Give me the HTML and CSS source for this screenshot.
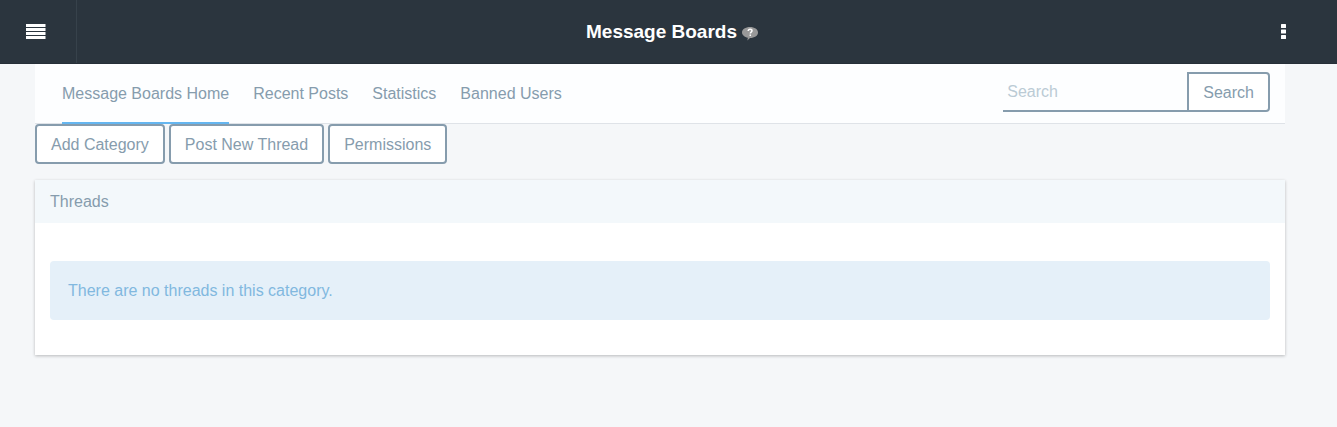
FILE: index.html
```html
<!DOCTYPE html>
<html lang="en">
<head>
<meta charset="utf-8">
<title>Message Boards</title>
<link rel="stylesheet" href="styles.css">
</head>
<body>
<header class="topbar">
  <button class="menu-toggle" type="button" aria-label="Menu">
    <svg width="20" height="15" viewBox="0 0 20 15" fill="#fff" aria-hidden="true"><path d="M0 0h19.500v3H0zM0 4h19.500v3H0zM0 8h19.500v3H0zM0 12h19.500v3H0z"/></svg>
  </button>
  <div class="title-wrap">
    <h1 class="title">Message Boards</h1>
    <svg class="help" width="16" height="14" viewBox="0 0 16 14" aria-hidden="true"><path fill="#999" d="M8 0c4.500 0 8 2.300 8 5.500s-3.500 5.500-8 5.500L5.300 13.400l.6-2.700C2.500 10 0 8 0 5.500 0 2.300 3.500 0 8 0z"/><path d="M6.200 4c0-1.100.8-1.700 1.900-1.700s1.900.7 1.900 1.500c0 1.300-1.700 1.300-1.700 2.700M8.300 7.500V9" fill="none" stroke="#fff" stroke-width="1.500"/></svg>
  </div>
  <button class="options" type="button" aria-label="Options">
    <svg width="5" height="15" viewBox="0 0 5 15" fill="#fff" aria-hidden="true"><rect width="5" height="4" rx=".5"/><rect y="5.500" width="5" height="4" rx=".5"/><rect y="11" width="5" height="4" rx=".5"/></svg>
  </button>
</header>
<main class="content">
  <div class="navbar">
    <nav class="tabs">
      <a class="tab tab-active" href="#">Message Boards Home</a>
      <a class="tab" href="#">Recent Posts</a>
      <a class="tab" href="#">Statistics</a>
      <a class="tab" href="#">Banned Users</a>
    </nav>
    <form class="search" role="search">
      <input class="search-input" type="text" placeholder="Search" aria-label="Search">
      <button class="btn search-btn" type="submit">Search</button>
    </form>
  </div>
  <div class="actions">
    <button class="btn" type="button">Add Category</button>
    <button class="btn" type="button">Post New Thread</button>
    <button class="btn" type="button">Permissions</button>
  </div>
  <section class="panel">
    <h2 class="panel-title">Threads</h2>
    <div class="panel-body">
      <p class="alert">There are no threads in this category.</p>
    </div>
  </section>
</main>
</body>
</html>
```
FILE: styles.css
```css
* { box-sizing: border-box; }
body {
  margin: 0;
  min-height: 100vh;
  background: #f5f7f9;
  color: #869cad;
  font: 16px/24px "Liberation Sans", Arial, sans-serif;
}
button, input { font: inherit; }
.topbar {
  display: grid;
  grid-template-columns: 77px 1fr 70px;
  height: 64px;
  background: #2b353e;
  border-bottom: 1px solid #262f38;
}
.menu-toggle, .options {
  display: flex;
  align-items: center;
  border: 0;
  background: none;
  padding: 0;
}
.menu-toggle { padding-left: 26px; border-right: 1px solid #37424b; }
.options { padding-left: 14px; }
.title-wrap {
  display: flex;
  align-items: center;
  justify-content: center;
  gap: 5px;
}
.title { margin: 0; font-size: 19px; color: #fff; }
.help { margin-top: 5px; }
.content { padding: 0 52px 24px 35px; }
.navbar {
  display: flex;
  justify-content: space-between;
  height: 60px;
  padding: 0 15px 0 27px;
  background: #fdfeff;
  border-bottom: 1px solid #dfe3e8;
}
.tabs { display: flex; gap: 24px; height: 60px; }
.tab {
  padding-top: 18px;
  color: inherit;
  text-decoration: none;
  border-bottom: 2px solid transparent;
}
.tab-active { border-color: #65b6f0; }
.search { display: flex; align-items: center; height: 56px; }
.search-input {
  width: 184px;
  height: 40px;
  padding: 2px 4px 0;
  border: 0;
  border-bottom: 2px solid #869cad;
  border-radius: 0;
  background: none;
  color: #869cad;
}
.search-input::placeholder { color: #bbcbd5; opacity: 1; }
.btn {
  height: 40px;
  padding: 1px 14px 0;
  border: 2px solid #869cad;
  border-radius: 4px;
  background: #fff;
  color: #869cad;
}
.search-btn { border-radius: 0 4px 4px 0; }
.actions { display: flex; gap: 4px; }
.panel {
  margin-top: 16px;
  background: #fff;
  box-shadow: 0 1px 3px rgba(0, 0, 0, .25);
}
.panel-title {
  margin: 0;
  padding: 10px 15px 9px;
  background: #f3f8fb;
  font-size: 16px;
  font-weight: 400;
}
.panel-body { padding: 38px 15px 35px; }
.alert {
  margin: 0;
  padding: 18px 18px 17px;
  border-radius: 4px;
  background: #e5f0f9;
  color: #81b8df;
}
```
